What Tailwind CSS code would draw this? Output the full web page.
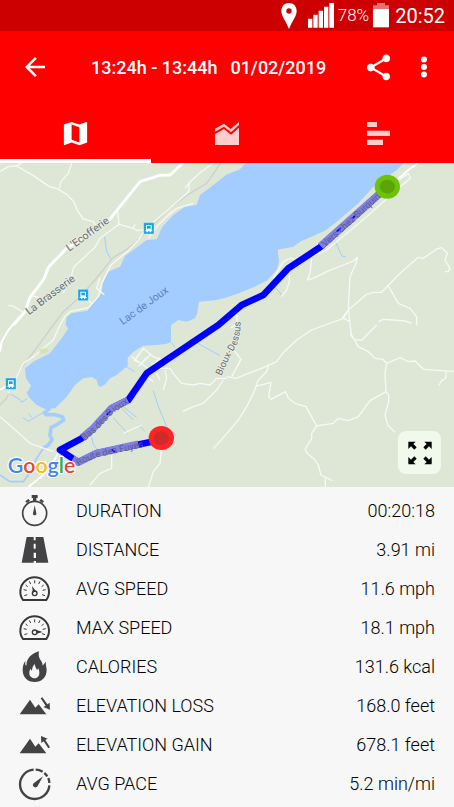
<!DOCTYPE html>
<html lang="en">

<head>
    <meta charset="UTF-8">
    <meta name="viewport" content="width=device-width, initial-scale=1.0">
    <title>Activity details</title>
    <script src="https://cdn.jsdelivr.net/npm/@tailwindcss/browser@4"></script>
</head>

<body class="bg-[#f7f7f7] min-h-screen font-['Roboto',sans-serif] text-black">

    <!-- Status bar -->
    <div class="flex h-[31px] items-center justify-end bg-[#cc0000] pr-[9px] text-white">
        <svg class="mr-[11px] h-[26px] w-4" viewBox="0 0 48 78" fill="white">
            <path fill-rule="evenodd"
                d="M24 0C10 0 1 10 1 24c0 16 14 30 23 54 9-24 23-38 23-54C47 10 38 0 24 0zm0 16a8 8 0 1 1 0 16 8 8 0 0 1 0-16z" />
        </svg>
        <svg class="mr-1 h-[25px] w-[26px]" viewBox="0 0 78 75" fill="white">
            <path d="M0 47h13v27H0zM16 35h13v39H16zM32 23h13v51H32zM48 11h13v63H48zM64 0h14v74H64z" />
        </svg>
        <span class="mr-1 text-[17px] font-light">78%</span>
        <svg class="mr-[6px] h-[25px] w-4" viewBox="0 0 48 75" fill="white">
            <path d="M12 0h24v7h12v11H0V7h12z" opacity=".45" />
            <path d="M0 18h48v55H0z" />
        </svg>
        <span class="text-[20px]">20:52</span>
    </div>

    <header class="bg-[#ff0000] text-white">
        <div class="flex h-[72px] items-center pr-[15px] pl-5">
            <button aria-label="Back">
                <svg class="size-[30px]" viewBox="0 0 24 24" fill="currentColor">
                    <path d="M20 11H7.83l5.59-5.59L12 4l-8 8 8 8 1.41-1.41L7.83 13H20v-2z" />
                </svg>
            </button>
            <h1 class="ml-[41px] flex flex-1 gap-[13px] text-[18px] font-medium whitespace-nowrap">
                <span>13:24h - 13:44h</span>
                <span>01/02/2019</span>
            </h1>
            <button aria-label="Share" class="mr-[15px]">
                <svg class="size-[31px]" viewBox="0 0 24 24" fill="currentColor">
                    <path
                        d="M18 16.08c-.76 0-1.44.3-1.96.77L8.91 12.7c.05-.23.09-.46.09-.7s-.04-.47-.09-.7l7.05-4.11c.54.5 1.25.81 2.04.81 1.66 0 3-1.34 3-3s-1.34-3-3-3-3 1.34-3 3c0 .24.04.47.09.7L8.04 9.81C7.5 9.31 6.79 9 6 9c-1.66 0-3 1.34-3 3s1.34 3 3 3c.79 0 1.5-.31 2.04-.81l7.12 4.16c-.05.21-.08.43-.08.65 0 1.61 1.31 2.92 2.92 2.92s2.92-1.31 2.92-2.92-1.31-2.92-2.92-2.92z" />
                </svg>
            </button>
            <button aria-label="More options">
                <svg class="size-[30px]" viewBox="0 0 24 24" fill="currentColor">
                    <circle cx="12" cy="6" r="2.4" />
                    <circle cx="12" cy="12" r="2.4" />
                    <circle cx="12" cy="18" r="2.4" />
                </svg>
            </button>
        </div>

        <nav class="grid h-[60px] grid-cols-3">
            <button aria-label="Map" class="flex items-center justify-center border-b-4 border-white pt-1">
                <svg class="size-[31px]" viewBox="0 0 24 24" fill="currentColor">
                    <path
                        d="M20.5 3l-.16.03L15 5.1 9 3 3.36 4.9c-.21.07-.36.25-.36.48V20.5c0 .28.22.5.5.5l.16-.03L9 18.9l6 2.1 5.64-1.9c.21-.07.36-.25.36-.48V3.5c0-.28-.22-.5-.5-.5zM15 19l-6-2.11V5l6 2.11V19z" />
                </svg>
            </button>
            <button aria-label="Charts" class="flex items-center justify-center border-b-4 border-transparent pt-1">
                <svg class="h-6 w-6" viewBox="0 0 72 72" fill="#ffcccc">
                    <path d="M0 23L27 8l20 16L72 3v9L48 34 27 17 0 32z" />
                    <path d="M0 39l27-15 21 17 24-21v52H0z" />
                </svg>
            </button>
            <button aria-label="Laps" class="flex items-center justify-center border-b-4 border-transparent pt-1">
                <svg class="h-[23px] w-[23px]" viewBox="0 0 69 69" fill="#ffcccc">
                    <path d="M0 0h30v15H0zM0 26h69v16H0zM0 53h48v16H0z" />
                </svg>
            </button>
        </nav>
    </header>

    <main>
        <!-- Map -->
        <div class="relative">
            <svg class="block h-auto w-full bg-[#dee6d6]" viewBox="0 9 1362 972" fill="none" stroke-linejoin="round">
                <!-- lake -->
                <path fill="#a3ccff"
                    d="M1212 9L1190 30 1155 55 1130 70 1075 130 1010 185 975 212 904 243 880 260 833 269 837 305 830 330 800 362 760 382 720 398 681 412 650 420 597 425 592 460 585 475 560 485 535 480 518 492 513 495V547L497 552 470 555 430 557 400 575 383 593V617L350 645 330 655 316 673 300 681 294 675 290 660 275 651 250 655 225 675 200 710 180 730 165 745 135 747 110 735 90 715 80 700 93 677 78 655 75 625 100 605 150 580 185 535 205 505 197 495 200 470 215 460 262 452 280 430 305 400 308 370 325 335 360 320 375 288 420 255 440 240 470 238 487 200 520 165 555 140 590 135 600 105 640 75 681 43 719 28 738 9z" />
                <path fill="#dee6d6" d="M681 9H738L719 28 681 43z" />
                <!-- streams -->
                <path stroke="#a3ccff" stroke-width="11"
                    d="M150 745L133 758 138 764 165 764 187 770 191 780 172 793 153 803 150 825 156 840 145 855 130 865" />
                <path stroke="#a3ccff" stroke-width="5" d="M130 865L110 895 100 915M0 945L30 965 70 965 95 930" />
                <path stroke="#a3ccff" stroke-width="3"
                    d="M314 230L320 275 333 297M1006 245L1026 288 1038 291M824 380L845 405M32 703L62 720 65 727 82 715M68 772L85 784 130 757M85 760L95 772M378 620L405 635M515 548L525 563M570 537L660 587M460 692L475 740 500 800 529 827M370 740L410 772M365 745L400 780M340 773L382 820M415 795L435 815M275 830L280 855 300 875" />
                <!-- railway -->
                <path stroke="#cdd1cd" stroke-width="4"
                    d="M662 9L620 70 565 103 503 150 430 225 385 265 340 292 285 360 235 415 190 455 160 495 120 550 60 630 20 715 0 735" />
                <!-- main roads -->
                <path stroke="#fff" stroke-width="9"
                    d="M549 9L510 45 480 46 420 65 330 177 290 210 200 265 145 322 132 357 90 412 75 455 40 495" />
                <path stroke="#fff" stroke-width="6"
                    d="M60 470L25 510 5 545 0 575M0 690L30 670M180 870L160 905 130 945 85 981M1255 9L1225 30 1180 70" />
                <!-- small roads -->
                <g stroke="#f7f9f5" stroke-width="4">
                    <path d="M0 35L25 20 50 18 65 9M50 18L100 47 148 80 170 85 200 103 222 125 230 148 250 177 280 185 290 200M215 9L205 40 183 65 178 85" />
                    <path d="M353 152L357 193 300 235 285 262 222 320 215 345 200 365 190 400M357 193L400 205 413 212 440 208M400 205L405 193" />
                    <path d="M640 9L600 38 568 68 566 95 503 150 440 205 415 240 385 272 333 315 305 370 295 410 265 443 210 455 195 470 180 495M568 68L555 85M515 155L470 200 445 235M580 130L530 145 500 170M300 352L290 385 313 404M248 405L275 430" />
                    <path d="M25 436L40 438 70 458M95 407L115 412 122 425M180 495L160 540 100 590 70 610 45 660 25 700M0 770L40 805 90 850 160 875" />
                    <path d="M405 600L430 565M395 590L450 630 440 650M400 600L425 610 450 585M430 565L460 590 510 610M415 620L440 592M455 620L480 593M440 650L460 665M455 610L485 625 510 625 522 643 545 670 580 675 600 670 630 675 650 655 681 655M495 630L500 655 490 690M470 640L480 660M548 755L580 740 610 730 650 690 670 660" />
                    <path d="M693 505L710 490 712 465 690 475M700 568L723 598 695 650M681 650L708 655 745 640 790 623 830 605 848 580 890 540 935 510 975 495 1031 475 1045 450 1100 403 1120 397 1145 397 1200 340 1255 292 1270 295 1310 267 1325 263 1342 280 1335 300 1350 325 1345 335 1335 335" />
                    <path d="M935 295L930 340 922 360 945 353 980 335 1060 303 1072 292 1068 310 1050 350 1045 440 1050 495 1055 525 1075 560 1105 575 1125 595 1148 598 1160 610 1155 640 1158 695 1166 705 1166 725 1155 765 1163 795 1185 817M1045 450L1027 473 1050 485M1165 378L1195 430 1230 445 1250 470 1250 495M1135 485L1150 478 1180 480 1215 483 1235 490M1130 495L1085 541 1062 538 1050 522M1160 610L1200 593 1215 600 1225 605 1245 603 1270 628 1362 634M1338 633L1337 655 1325 662 1317 677" />
                    <path d="M806 612L800 635 775 660 760 700 740 740 715 780 681 820 640 866M765 680L813 667 806 710 813 718 857 695 865 715 885 730 918 740 950 798 980 793 1000 790 1015 775 1045 782 1075 770 1110 722 1158 695M950 798L935 820V835L915 868 922 880 945 900 955 915 963 945 997 962M976 950V981" />
                    <path d="M484 870L480 910 460 935 445 981M335 885V925L300 940 270 975M370 820L425 795M820 355L850 305 872 294 885 300M868 345V365L860 390 844 410M1180 70L1225 40 1231 55 1200 80 1100 170 980 270 935 290M1040 185L1070 170" />
                </g>
                <path fill="#cfe5b8" d="M118 570l18-7 12 7-12 10-16 2z" />

                <!-- bus stops -->
                <g transform="translate(431 188)">
                    <path fill="#12a5ea" stroke="#fff" stroke-width="1" d="M0 0h31v34H0z" />
                    <path fill="#fff" d="M7 7h17v16h2v3h-4v3h-4v-3h-5v3H9v-3H5v-3h2z" />
                    <path fill="#12a5ea" d="M10 10h11v8H10z" />
                </g>
                <g transform="translate(234 388)">
                    <path fill="#12a5ea" stroke="#fff" stroke-width="1" d="M0 0h31v34H0z" />
                    <path fill="#fff" d="M7 7h17v16h2v3h-4v3h-4v-3h-5v3H9v-3H5v-3h2z" />
                    <path fill="#12a5ea" d="M10 10h11v8H10z" />
                </g>
                <g transform="translate(17 654)">
                    <path fill="#12a5ea" stroke="#fff" stroke-width="1" d="M0 0h31v34H0z" />
                    <path fill="#fff" d="M7 7h17v16h2v3h-4v3h-4v-3h-5v3H9v-3H5v-3h2z" />
                    <path fill="#12a5ea" d="M10 10h11v8H10z" />
                </g>

                <!-- route -->
                <path stroke="#0000ff" stroke-width="20"
                    d="M1162 80L960 262 865 325 790 405 725 435 655 495 440 640 385 720 335 745 280 805 245 835 180 870 235 907 290 880 484 839" />
                <path stroke="#8080e8" stroke-width="22"
                    d="M1135 104L962 258M383 721L335 745 280 805 247 833M218 897L235 907 290 880 415 852" />
                <path stroke="#0000ff" stroke-width="5" d="M1010 215l12 -10M1057 175l8 -7M320 765l12 -12M335 868l10 8" />

                <!-- place names -->
                <defs>
                    <path id="p-bas" d="M254 843L290 812 340 759 395 723 440 690" />
                    <path id="p-route" d="M236 918L250 908 290 892 500 846" />
                    <path id="p-dessus" d="M664 648L690 590 712 550 721 515 724 440" />
                </defs>
                <g class="text-[32px]" fill="#676b70" stroke="#e8ede3" stroke-width="6" paint-order="stroke">
                    <text transform="translate(208 275) rotate(-36)">L'Ecofferie</text>
                    <text transform="translate(87 466) rotate(-37)">La Brasserie</text>
                    <text class="text-[29px]"><textPath href="#p-dessus">Bioux-Dessus</textPath></text>
                </g>
                <text class="text-[32px]" fill="#5882bd" transform="translate(368 496) rotate(-36)">Lac de Joux</text>
                <g class="text-[28px]" fill="#5e5e80">
                    <text transform="translate(976 262) rotate(-42)">Vers·chez Burquin</text>
                    <text><textPath href="#p-bas">Bas des Bioux</textPath></text>
                    <text><textPath href="#p-route">Route des Fuyes</textPath></text>
                </g>

                <ellipse cx="1162" cy="80" rx="38" ry="36" fill="#6cc406" />
                <ellipse cx="1162" cy="80" rx="23" ry="21" fill="#5aa505" />
                <ellipse cx="484" cy="834" rx="38" ry="36" fill="#ff2424" />
                <ellipse cx="484" cy="834" rx="23" ry="21" fill="#d02a2a" />

                <text x="23" y="938" class="font-['Lato',sans-serif] text-[64px] font-semibold" stroke="#fff"
                    stroke-width="7" paint-order="stroke"><tspan fill="#4285f4">G</tspan><tspan
                        fill="#ea4335">o</tspan><tspan fill="#fbbc05">o</tspan><tspan fill="#4285f4">g</tspan><tspan
                        fill="#34a853">l</tspan><tspan fill="#ea4335">e</tspan></text>
            </svg>

            <button aria-label="Full screen"
                class="absolute right-[13px] bottom-[13px] flex size-[43px] items-center justify-center rounded-lg bg-[#f1f9ec]">
                <svg class="size-6" viewBox="0 0 72 72" fill="black">
                    <path d="M1 2h22l-7 7 10 10-7 7L9 16l-8 8z" />
                    <path d="M71 2H49l7 7-10 10 7 7 10-10 8 8z" />
                    <path d="M1 70h22l-7-7 10-10-7-7L9 56l-8-8z" />
                    <path d="M71 70H49l7-7-10-10 7-7 10 10 8-8z" />
                </svg>
            </button>
        </div>

        <!-- Stats -->
        <table class="mt-1 w-full text-[18px] font-light">
            <tbody>
                <tr class="h-[39px]">
                    <td class="w-[76px] pl-[17px]">
                        <svg class="block size-9" viewBox="0 0 108 108" fill="#434345">
                            <circle cx="53" cy="61" r="36" fill="none" stroke="#434345" stroke-width="5" />
                            <path d="M44 6h18v9h-4v9H48v-9h-4zM53 37l5 24c2 8-12 8-10 0z" />
                            <path d="M25 25l9-7 5 5-9 7zM81 25l-9-7-5 5 9 7z" />
                        </svg>
                    </td>
                    <th scope="row" class="text-left font-light">DURATION</th>
                    <td class="pr-[19px] text-right">00:20:18</td>
                </tr>
                <tr class="h-[39px]">
                    <td class="w-[76px] pl-[17px]">
                        <svg class="block size-9" viewBox="0 0 108 108" fill="#434345">
                            <path d="M29 15h50l15 77H14z" />
                            <path fill="#f7f7f7" d="M50 15h6v10h-6zM50 35h6v15h-6zM50 62h7v16h-7zM50 87h7v6h-7z" />
                        </svg>
                    </td>
                    <th scope="row" class="text-left font-light">DISTANCE</th>
                    <td class="pr-[19px] text-right">3.91 mi</td>
                </tr>
                <tr class="h-[39px]">
                    <td class="w-[76px] pl-[17px]">
                        <svg class="block size-9" viewBox="0 0 108 108" fill="none" stroke="#38383a">
                            <path stroke-width="6" d="M18 87a43 43 0 1 1 70 0z" />
                            <path stroke-width="3"
                                d="M53 28v9M37 31l4 8M69 31l-4 8M26 42l6 5M80 42l-6 5M20 56l9 2M86 56l-9 2M22 74l9-3M84 74l-9-3" />
                            <circle cx="53" cy="67" r="7" stroke-width="4" />
                            <path fill="#38383a" stroke="none" d="M45 45l12 16-9 4z" />
                        </svg>
                    </td>
                    <th scope="row" class="text-left font-light">AVG SPEED</th>
                    <td class="pr-[19px] text-right">11.6 mph</td>
                </tr>
                <tr class="h-[39px]">
                    <td class="w-[76px] pl-[17px]">
                        <svg class="block size-9" viewBox="0 0 108 108" fill="none" stroke="#38383a">
                            <path stroke-width="6" d="M18 87a43 43 0 1 1 70 0z" />
                            <path stroke-width="3"
                                d="M53 28v9M37 31l4 8M69 31l-4 8M26 42l6 5M80 42l-6 5M20 56l9 2M86 56l-9 2M22 74l9-3M84 74l-9-3" />
                            <circle cx="53" cy="67" r="7" stroke-width="4" />
                            <path fill="#38383a" stroke="none" d="M77 66l-19-6v11z" />
                        </svg>
                    </td>
                    <th scope="row" class="text-left font-light">MAX SPEED</th>
                    <td class="pr-[19px] text-right">18.1 mph</td>
                </tr>
                <tr class="h-[39px]">
                    <td class="w-[76px] pl-[17px]">
                        <svg class="block size-9" viewBox="0 0 108 108" fill="#434345">
                            <path
                                d="M66 7C63 22 68 30 74 38C76 42 77 46 77 50C80 46 83 42 87 38C85 48 89 54 89 63C89 85 74 99 53 99S17 85 17 63C17 52 19 44 25 35C24 45 25 49 28 50C29 28 42 14 66 7z" />
                            <path fill="#f7f7f7"
                                d="M54 45C53 52 57 56 60 63C62 62 63 60 63 57C66 62 67 66 67 72C67 82 60 88 53 88S37 83 37 73C37 67 38 63 41 59C42 62 43 64 45 65C45 57 48 49 54 45z" />
                        </svg>
                    </td>
                    <th scope="row" class="text-left font-light">CALORIES</th>
                    <td class="pr-[19px] text-right">131.6 kcal</td>
                </tr>
                <tr class="h-[39px]">
                    <td class="w-[76px] pl-[17px]">
                        <svg class="block size-9" viewBox="0 0 108 108" fill="#434345">
                            <path d="M8 79l31-44 16 24 10-10 23 30z" />
                            <path d="M71 31l5-3 15 21 7-5 1 21-20-8 7-4z" />
                        </svg>
                    </td>
                    <th scope="row" class="text-left font-light">ELEVATION LOSS</th>
                    <td class="pr-[19px] text-right">168.0 feet</td>
                </tr>
                <tr class="h-[39px]">
                    <td class="w-[76px] pl-[17px]">
                        <svg class="block size-9" viewBox="0 0 108 108" fill="#434345">
                            <path d="M8 79l31-44 16 24 10-10 23 30z" />
                            <path d="M99 61l-5 3-14-21-7 5-1-21 20 8-7 4z" />
                        </svg>
                    </td>
                    <th scope="row" class="text-left font-light">ELEVATION GAIN</th>
                    <td class="pr-[19px] text-right">678.1 feet</td>
                </tr>
                <tr class="h-[39px]">
                    <td class="w-[76px] pl-[17px]">
                        <svg class="block size-9" viewBox="0 0 108 108" fill="#434345">
                            <path fill="none" stroke="#434345" stroke-width="7"
                                d="M97 58A44 44 0 1 1 50 11M56 11A44 44 0 0 1 77 17M82 21A44 44 0 0 1 91 31M94 36A44 44 0 0 1 97 51" />
                            <path d="M78 31L62 60c-6 10-20 0-12-8z" />
                        </svg>
                    </td>
                    <th scope="row" class="text-left font-light">AVG PACE</th>
                    <td class="pr-[19px] text-right">5.2 min/mi</td>
                </tr>
            </tbody>
        </table>
    </main>
</body>

</html>
